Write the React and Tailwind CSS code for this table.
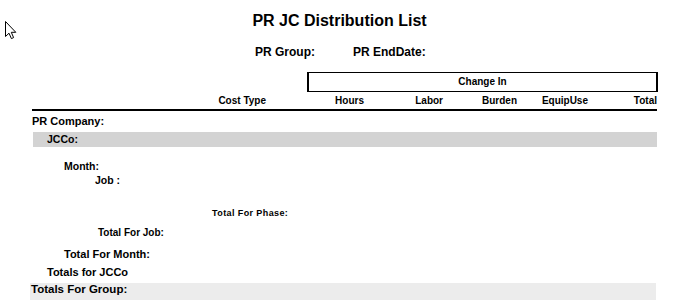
import React from "react";

// Report header columns: label, width (px), all right-aligned
const columns = [
  { label: "Cost Type", width: 234 },
  { label: "Hours", width: 98 },
  { label: "Labor", width: 79 },
  { label: "Burden", width: 74 },
  { label: "EquipUse", width: 71 },
  { label: "Total", width: 69 },
];

const Pointer = () => (
  <svg
    className="absolute left-[5px] top-[21px]"
    width="12"
    height="19"
    viewBox="0 0 12 19"
  >
    <path
      d="M0.5 0.5 L0.5 15.5 L4 12.2 L6.4 17.6 L8.6 16.6 L6.3 11.3 L10.8 11.3 Z"
      fill="#fff"
      stroke="#000"
      strokeWidth="1"
      strokeLinejoin="miter"
    />
  </svg>
);

export default function App() {
  return (
    <div
      className="relative w-[686px] h-[306px] overflow-hidden bg-white text-black font-bold"
      style={{ fontFamily: '"Liberation Sans", Arial, sans-serif' }}
    >
      <Pointer />

      {/* Title */}
      <div className="w-[679px] h-[42px] leading-[42px] text-center text-[16px]">
        PR JC Distribution List
      </div>

      {/* Group / end date parameters */}
      <div className="flex gap-[38px] pl-[255px] h-[20px] leading-[20px] text-[12px]">
        <span>PR Group:</span>
        <span>PR EndDate:</span>
      </div>

      {/* Change In caption box */}
      <div className="mt-[10px] ml-[307px] w-[351px] h-[20px] border-x-2 border-y border-black text-center text-[10px] leading-[18px]">
        Change In
      </div>

      {/* Column headings */}
      <div className="ml-[32px] w-[625px] h-[19px] flex border-b-2 border-black text-[10px] leading-[17px]">
        {columns.map((c) => (
          <div key={c.label} className="text-right" style={{ width: c.width }}>
            {c.label}
          </div>
        ))}
      </div>

      {/* Group sections */}
      <div className="ml-[32px] h-[21px] leading-[21px] text-[11px]">PR Company:</div>
      <div className="ml-[33px] w-[624px] h-[15px] leading-[15px] bg-[#d3d3d3] pl-[14px] text-[10.5px]">
        JCCo:
      </div>
      <div className="pt-[11px] pl-[64px] leading-[16px] text-[10.5px]">Month:</div>
      <div className="pl-[95px] h-[13px] leading-[13px] text-[10.5px]">Job :</div>

      {/* Footers */}
      <div className="pt-[20px] pl-[212px] leading-[13px] text-[9px] tracking-[0.4px]">
        Total For Phase:
      </div>
      <div className="pl-[98px] h-[25px] leading-[25px] text-[10px]">Total For Job:</div>
      <div className="pl-[64px] h-[19px] leading-[19px] text-[11px]">Total For Month:</div>
      <div className="pl-[47px] h-[17px] leading-[17px] text-[11px]">Totals for JCCo</div>
      <div className="mt-[2px] ml-[30px] w-[626px] h-[17px] bg-[#ececec] pl-[1px] leading-[13px] text-[11.5px]">
        Totals For Group:
      </div>
    </div>
  );
}
